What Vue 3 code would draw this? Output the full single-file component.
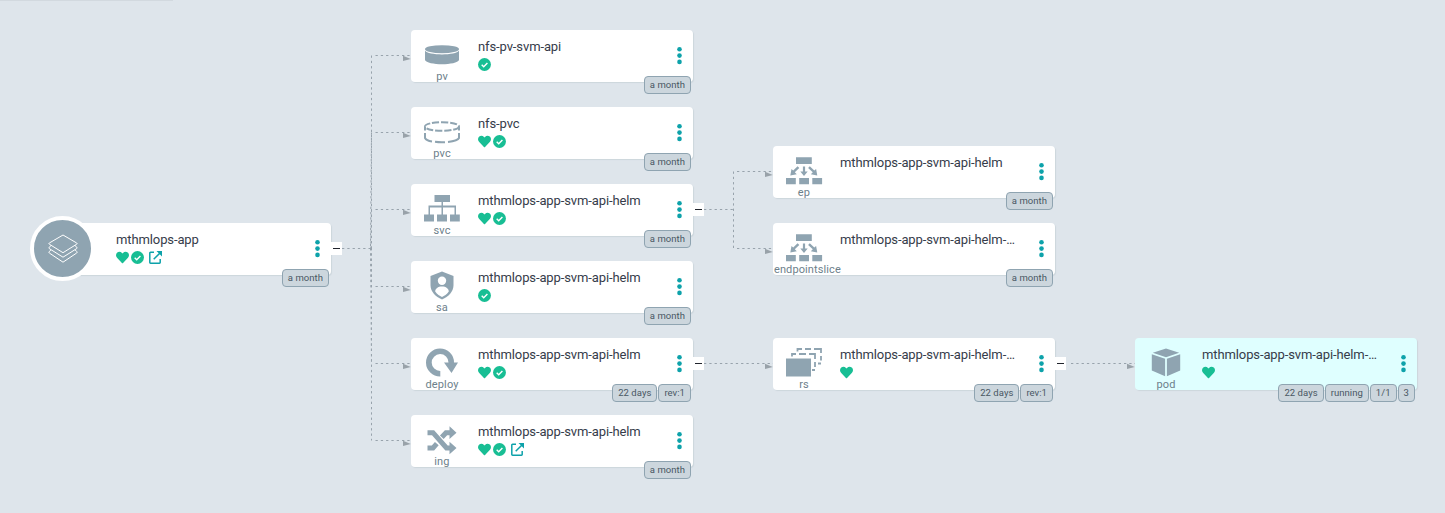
<script setup>
const month = ['a month']
const helm = 'mthmlops-app-svm-api-helm'

const nodes = [
  { id: 'app', root: true, x: 49, y: 223, name: 'mthmlops-app', icons: ['heart', 'check', 'link'], tags: month, toggle: true },
  { id: 'pv', kind: 'pv', x: 411, y: 30, name: 'nfs-pv-svm-api', icons: ['check'], tags: month },
  { id: 'pvc', kind: 'pvc', x: 411, y: 107, name: 'nfs-pvc', icons: ['heart', 'check'], tags: month },
  { id: 'svc', kind: 'svc', x: 411, y: 184, name: helm, icons: ['heart', 'check'], tags: month, toggle: true },
  { id: 'sa', kind: 'sa', x: 411, y: 261, name: helm, icons: ['check'], tags: month },
  { id: 'deploy', kind: 'deploy', x: 411, y: 338, name: helm, icons: ['heart', 'check'], tags: ['22 days', 'rev:1'], toggle: true },
  { id: 'ing', kind: 'ing', x: 411, y: 415, name: helm, icons: ['heart', 'check', 'link'], tags: month },
  { id: 'ep', kind: 'ep', x: 773, y: 146, name: helm, icons: [], tags: month },
  { id: 'eps', kind: 'endpointslice', x: 773, y: 223, name: helm + '-…', icons: [], tags: month },
  { id: 'rs', kind: 'rs', x: 773, y: 338, name: helm + '-…', icons: ['heart'], tags: ['22 days', 'rev:1'], toggle: true },
  { id: 'pod', kind: 'pod', x: 1135, y: 338, name: helm + '-…', icons: ['heart'], tags: ['22 days', 'running', '1/1', '3'], active: true },
]

const edges = [
  'M342 248.5H371', 'M371.5 55.5V248',
  'M371.5 132.5L370.5 248', 'M371.5 209.5L370.8 248',
  'M370.8 248L371.5 286.5', 'M370.5 248L371.5 363.5', 'M371.5 248V440.5',
  ...[55.5, 132.5, 209.5, 286.5, 363.5, 440.5].map((y) => `M375.500 ${y}H411`),
  'M704 209.5H733', 'M733.5 171.5V248.5', 'M737 171.5H773', 'M737 248.5H773',
  'M704 363.5H773', 'M1071 363.5H1135',
]

const arrows = [
  [403, 55], [403, 132], [403, 209], [403, 286], [403, 363], [403, 440],
  [765, 171], [765, 248], [765, 363], [1127, 363],
]
</script>

<template>
  <div class="canvas">
    <div class="top-shadow"></div>
    <svg class="edges" width="1445" height="513">
      <path v-for="d in edges" :key="d" :d="d" class="edge" />
      <path v-for="[x, y] in arrows" :key="x + '-' + y" class="arrow" :d="`M${x} ${y + 0.8}L${x + 7.8} ${y + 4}L${x} ${y + 6}z`" />
    </svg>

    <article
      v-for="n in nodes"
      :key="n.id"
      class="node"
      :class="{ root: n.root, active: n.active }"
      :style="{ left: n.x + 'px', top: n.y + 'px' }"
    >
      <div v-if="n.root" class="medal">
        <svg width="30" height="30" viewBox="0 0 30 30" fill="none" stroke="#fff" stroke-width="1" stroke-linejoin="round">
          <path d="M15 1L28.7 9Q29.6 9.6 28.7 10.2L15 18.7 1.3 10.2Q.4 9.6 1.3 9z" />
          <path d="M3 11.6L1.2 13.2Q.5 14 1.3 14.6L15 23.2l13.700-8.600Q29.500 14 28.800 13.200L27 11.600" />
          <path d="M3 15.800L1.200 17.600Q.5 18.400 1.300 19L15 28.200l13.700-9.200Q29.500 18.400 28.800 17.600L27 15.800" />
        </svg>
      </div>
      <div v-else class="kind">
        <svg class="glyph" width="40" height="36" viewBox="0 0 40 36">
          <g v-if="n.kind === 'pv'">
            <path d="M3 12.500c3 5.200 31 5.200 34 0v9.500c-2 5.600-32 5.600-34 0z" />
            <ellipse cx="20" cy="11.200" rx="17" ry="4" />
          </g>
          <g v-else-if="n.kind === 'pvc'" fill="none" stroke="#8fa4b1" stroke-width="2">
            <ellipse cx="20" cy="11.500" rx="17" ry="4.300" stroke-dasharray="7 1.900" />
            <path d="M3 12v3.500M37 12v3.500M3 18v5c1 2 4 3 7 3.400M13 26.800c4 .6 7 .6 10 .4M26 26.900c5-.5 10-1.600 11-3.900v-5" />
          </g>
          <g v-else-if="n.kind === 'svc'">
            <path d="M12.500 3h15.500v7H21v3.500h13V22.500h3.800v7H28v-7h4.500V15.500H21v7h4v7h-10v-7h4.500v-7H8v7h4v7H2v-7h4.500v-9h13V10h-7z" />
          </g>
          <g v-else-if="n.kind === 'sa'">
            <path d="M20 2.500L31.500 7v9c0 7-5 11.500-11.500 14.500C13.500 27.500 8.500 23 8.500 16V7z" />
            <circle cx="20" cy="11.700" r="4.200" fill="#fff" />
            <path d="M20 17.400c4 0 6.800 2 6.800 5.200-2 2.800-4.500 4.600-6.800 5.400-2.300-.8-4.800-2.600-6.800-5.400 0-3.200 2.800-5.200 6.800-5.200z" fill="#fff" />
          </g>
          <g v-else-if="n.kind === 'deploy'">
            <path d="M18.300 30.500A14 14 0 1 1 32 16.500h4L29.500 27 22 16.500h4.500a8.400 8.400 0 1 0-8.200 8.400z" />
          </g>
          <g v-else-if="n.kind === 'ing'">
            <path d="M5.500 9.700H11L24.500 25H29M5.500 25H11l3.800-4.300M19.800 14.300L24 9.700h5" fill="none" stroke="#8fa4b1" stroke-width="5" />
            <path d="M27.500 3.300l7 6.400-7 6.300zM27.500 18.700l7 6.300-7 6.300z" />
          </g>
          <g v-else-if="n.kind === 'ep' || n.kind === 'endpointslice'">
            <path d="M12 3.300h15.800v6.800H12zM2 24h9.800v6.200H2zM15.200 24H25v6.200h-9.800zM28.300 24h9.800v6.200h-9.800z" />
            <path d="M18.900 12.500h2.200v5h2.600L20 22l-3.700-4.500h2.600zM13.600 12.200l1.700 1.700-4.500 4.300 2 2-6.500 1.400 1.200-6.600 1.700 1.600zM25.800 12.200l-1.700 1.700 4.700 4.300-2 2 6.500 1.400-1.200-6.600-1.800 1.600z" />
          </g>
          <g v-else-if="n.kind === 'rs'">
            <path d="M2 12.500h25v18H2z" />
            <path d="M8 10.500V8h4M15 8h7M25 8h6v5M31 16v5M31 24h-3" fill="none" stroke="#8fa4b1" stroke-width="1.800" />
            <path d="M13.500 5.500V3H18M21 3h6M30 3h7v4M37 10v4.500M37 17.500h-3" fill="none" stroke="#8fa4b1" stroke-width="1.800" />
          </g>
          <g v-else>
            <path d="M20 2.500l13.200 4.200L20 11.200 6.800 6.700zM5.800 8.200l13.300 4.600v17.500L5.800 24.500zM34.200 8.200l-13.300 4.600v17.500l13.300-5.800z" />
          </g>
        </svg>
        <span class="label" :class="{ wide: n.kind === 'endpointslice' }">{{ n.kind }}</span>
      </div>

      <div class="body">
        <div class="name">{{ n.name }}</div>
        <div class="status">
          <template v-for="i in n.icons" :key="i">
            <svg v-if="i === 'heart'" width="13" height="13" viewBox="0 0 512 512">
              <path fill="#18be94" d="M462 62c-55-46-136-38-186 14l-20 20-20-20C186 24 105 16 50 62c-63 54-66 150-10 208l194 200c12 13 32 13 44 0l194-200c56-58 53-154-10-208z" />
            </svg>
            <svg v-else-if="i === 'check'" width="13" height="13" viewBox="0 0 13 13">
              <circle cx="6.500" cy="6.500" r="6.450" fill="#18be94" />
              <path d="M3.700 6.700l2 2 3.700-3.800" fill="none" stroke="#fff" stroke-width="1.400" />
            </svg>
            <svg v-else class="link" width="13" height="13" viewBox="0 0 13 13" fill="none" stroke="#0da2aa" stroke-width="1.500">
              <path d="M5 1.300H1.500q-.7 0-.7.7v9.500q0 .7.7.7h9q.7 0 .7-.7V8M4.700 8.300L11 2" />
              <path d="M7.500 0H13v5.500z" fill="#0da2aa" stroke="none" />
            </svg>
          </template>
        </div>
      </div>

      <svg class="menu" width="5" height="18" viewBox="0 0 5 18" fill="#0da2aa">
        <circle cx="2.500" cy="2.300" r="2.300" />
        <circle cx="2.500" cy="8.600" r="2.300" />
        <circle cx="2.500" cy="14.900" r="2.300" />
      </svg>
      <span v-if="n.toggle" class="toggle"></span>
      <div class="tags">
        <span v-for="t in n.tags" :key="t" class="tag">{{ t }}</span>
      </div>
    </article>
  </div>
</template>

<style>
body {
  background: #dee5eb;
}
</style>

<style scoped>
.canvas {
  position: relative;
  height: 513px;
  overflow: hidden;
  background: #dee5eb;
  font-family: Roboto, "Liberation Sans", sans-serif;
}
.top-shadow {
  width: 173px;
  height: 1px;
  background: #d2d9df;
}
.edges {
  position: absolute;
  left: 0;
  top: 0;
}
.edge {
  fill: none;
  stroke: #98a3ac;
  stroke-width: 1;
  stroke-dasharray: 2.300 3;
}
.arrow {
  fill: #99a2a9;
}
.node {
  position: absolute;
  display: flex;
  width: 282px;
  height: 52px;
  border-radius: 4px;
  background: #fff;
  box-shadow: 1px 1px 1px #ccd6dc;
}
.active {
  background: #dfffff;
}
.kind {
  display: flex;
  flex: none;
  width: 62px;
  flex-direction: column;
  align-items: center;
  padding-top: 8px;
  color: #6d7f8b;
}
.glyph {
  flex: none;
  fill: #8fa4b1;
}
.label {
  margin-top: -4px;
  font-size: 11px;
  line-height: 13px;
  letter-spacing: 0.15px;
  white-space: nowrap;
}
.label.wide {
  align-self: flex-start;
  margin-left: 1px;
  letter-spacing: 0.1px;
}
.medal {
  display: flex;
  flex: none;
  align-items: center;
  justify-content: center;
  box-sizing: border-box;
  width: 65px;
  height: 65px;
  margin: -7px 0 0 -19px;
  border: 4px solid #fff;
  border-radius: 50%;
  background: #8fa4b1;
}
.body {
  flex: 1;
  padding: 8px 0 0 5px;
}
.root .body {
  padding-left: 21px;
}
.name {
  color: #363c4a;
  font-size: 13px;
  line-height: 18px;
  letter-spacing: -0.11px;
  white-space: nowrap;
}
.status {
  display: flex;
  gap: 2px;
  margin-top: 1.6px;
}
.link {
  margin-left: 3px;
}
.menu {
  flex: none;
  margin: 17px 11px 0 0;
}
.toggle {
  position: absolute;
  left: 282px;
  top: 19px;
  display: flex;
  align-items: center;
  justify-content: center;
  width: 11px;
  height: 13px;
  background: #fff;
}
.toggle::before {
  content: "";
  width: 7px;
  height: 1px;
  background: #20242c;
}
.tags {
  position: absolute;
  right: 2px;
  bottom: -12px;
  display: flex;
  gap: 1px;
}
.tag {
  box-sizing: border-box;
  height: 18px;
  padding: 0 5px;
  border: 1px solid #8fa4b1;
  border-radius: 4px;
  background: #ccd6dd;
  color: #495763;
  font-size: 9.500px;
  line-height: 16px;
  letter-spacing: 0.05px;
  white-space: nowrap;
}
</style>
